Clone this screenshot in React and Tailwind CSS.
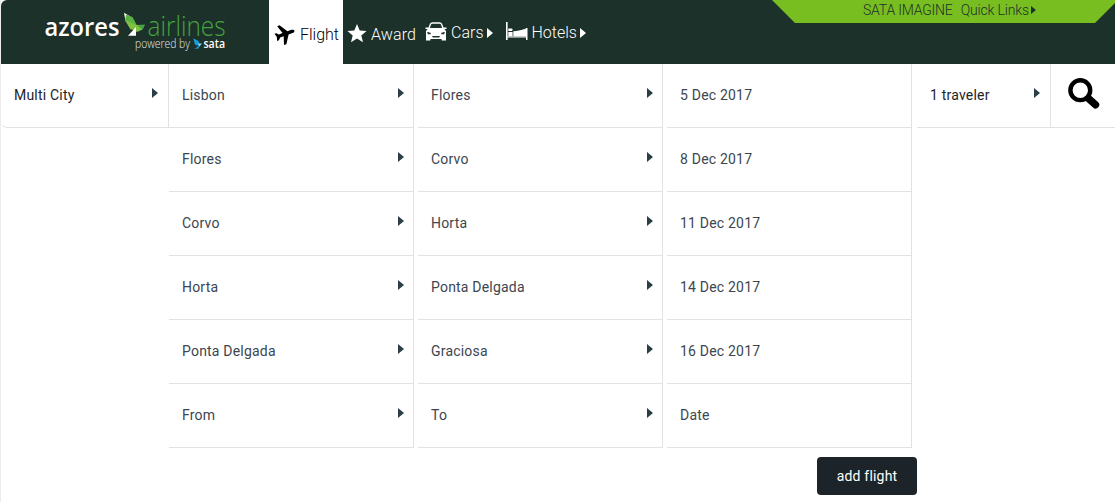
const legs = [
  { from: "Lisbon", to: "Flores", date: "5 Dec 2017" },
  { from: "Flores", to: "Corvo", date: "8 Dec 2017" },
  { from: "Corvo", to: "Horta", date: "11 Dec 2017" },
  { from: "Horta", to: "Ponta Delgada", date: "14 Dec 2017" },
  { from: "Ponta Delgada", to: "Graciosa", date: "16 Dec 2017" },
  { from: "From", to: "To", date: "Date" },
];

const Caret = ({ className = "" }) => (
  <svg className={`shrink-0 ${className}`} width="6" height="10" viewBox="0 0 6 10">
    <path d="M0 0L6 5L0 10Z" fill="currentColor" />
  </svg>
);

const Logo = () => (
  <svg className="ml-[43px] mt-2 shrink-0 overflow-visible" width="184" height="46" viewBox="44 8 184 46">
    <g fontFamily="'Open Sans', sans-serif">
      <text x="44.5" y="36" fontSize="25.5" fontWeight="600" fill="#fff" textLength="75" lengthAdjust="spacingAndGlyphs">azores</text>
      <text x="147.5" y="36" fontSize="27.5" fontWeight="300" fill="#46a33f" textLength="78" lengthAdjust="spacingAndGlyphs">airlines</text>
      <text x="135" y="48.3" fontSize="12" fontWeight="300" fill="#e6ece9" textLength="55" lengthAdjust="spacingAndGlyphs">powered by</text>
      <text x="203.5" y="48.3" fontSize="12" fontWeight="600" fill="#fff" textLength="21.5" lengthAdjust="spacingAndGlyphs">sata</text>
    </g>
    <path d="M124 12.7L129.5 16L125.5 21Z" fill="#fff" />
    <path d="M126 14.5L132.5 17L137.5 26.5L125 21Z" fill="#5cb043" />
    <path d="M124.8 20L137.5 25.5L136 29.5L130.5 29.5Z" fill="#7fc241" />
    <path d="M134.5 25L144.8 24.8L142.5 29.5L137 32L132 29.3Z" fill="#7fc241" />
    <path d="M137 25.5L144.8 24.8L142.5 29.5Z" fill="#43a047" />
    <path d="M128 35.8L136 27V35.8Z" fill="#fff" />
    <path d="M193.2 38.2L198.5 41L200 46L195 44.8Z" fill="#159bd7" />
    <path d="M198 43.5L202 43.5L199.3 46.8Z" fill="#8fd3f3" />
    <path d="M194.5 49L199.2 45.2L198.6 48.6Z" fill="#159bd7" />
  </svg>
);

const PlaneIcon = () => (
  <svg className="mb-0.5" width="22" height="22" viewBox="0 0 22 22">
    <path
      transform="rotate(-20 11 11)"
      d="M1.2 7.2H3.1L5.2 9.3H9L6.3 1H8.8L14.2 9.3H18.4C20 9.3 21 10.2 21 11S20 12.7 18.4 12.7H14.2L8.8 21H6.3L9 12.7H5.2L3.1 14.8H1.2L2.3 11Z"
    />
  </svg>
);

const StarIcon = () => (
  <svg className="mb-0.5" width="20" height="19" viewBox="0 0 20 19" fill="#fff">
    <path d="M10 0L12.7 6.4L19.6 6.9L14.3 11.4L16 18.2L10 14.5L4 18.2L5.7 11.4L.4 6.9L7.3 6.4Z" />
  </svg>
);

const CarIcon = () => (
  <svg className="mb-0.5" width="22" height="19" viewBox="0 0 22 19">
    <path d="M4 6.5L5.4 2.3Q5.9 1 7.5 1H14.5Q16.1 1 16.6 2.3L18 6.5" fill="none" stroke="#fff" strokeWidth="1.4" />
    <path d="M.5 5.5H4V7H.5ZM18 5.5H21.5V7H18Z" fill="#fff" />
    <path d="M3.5 6H18.5L21 9V18.4H16.6V17H5.4V18.4H1V9Z" fill="#fff" />
    <path d="M2.2 9.7L6 11L5.4 12.2H2.8ZM19.8 9.7L16 11L16.6 12.2H19.2ZM7 14H15L14.2 15.6H7.8Z" fill="#1c312a" />
  </svg>
);

const BedIcon = () => (
  <svg className="mb-0.5" width="22" height="19" viewBox="0 0 22 19" fill="#fff">
    <path d="M0 0H1.6V18H0ZM20 6H21.5V18H20ZM1.6 14.4H20V15.5H1.6Z" />
    <path d="M7.3 9.2C11 9.2 14.5 8.4 20 6.5V14.4H7.3ZM2.3 10H6.6V14.4H2.3Z" />
    <path d="M2.3 6.5H5.5Q6.6 6.5 6.6 7.8Q6.6 9 5.5 9H2.3Z" />
  </svg>
);

const SearchIcon = () => (
  <svg width="32" height="32" viewBox="0 0 32 32">
    <circle cx="12.3" cy="12.2" r="9.9" fill="none" stroke="#000" strokeWidth="4.4" />
    <path d="M20.5 20.5L27.5 26.8" stroke="#000" strokeWidth="7.4" strokeLinecap="round" />
  </svg>
);

const Field = ({ label, caret = true }) => (
  <div className="flex h-16 items-center justify-between border-b border-[#e2e2e2] pl-[13px] pr-[9px] pb-px text-[#3c4650]">
    <span>{label}</span>
    {caret && <Caret className="mb-[5px] text-[#2b3e46]" />}
  </div>
);

const Column = ({ items, caret, className = "" }) => (
  <div className={`h-96 w-[245px] shrink-0 border-r border-[#e2e2e2] ${className}`}>
    {items.map((item) => (
      <Field key={item} label={item} caret={caret} />
    ))}
  </div>
);

const Header = () => (
  <header className="relative flex h-16 rounded-tl-md bg-[#1c312a] text-white">
    <Logo />
    <nav className="ml-[41px] flex text-base font-light">
      <a className="flex h-16 w-[74px] items-center gap-1 bg-white pl-[5px] pt-[5px] text-black">
        <PlaneIcon />
        <span>Flight</span>
      </a>
      <a className="ml-1 flex items-center gap-1 pt-[5px]">
        <StarIcon />
        <span className="tracking-[0.1px]">Award</span>
      </a>
      <a className="ml-[9px] flex items-center pt-px">
        <CarIcon />
        <span className="ml-1">Cars</span>
        <Caret className="ml-[3px]" />
      </a>
      <a className="ml-[13px] flex items-center pt-px">
        <BedIcon />
        <span className="ml-1">Hotels</span>
        <Caret className="ml-[3px]" />
      </a>
    </nav>
    <div className="absolute left-[771px] top-0 flex h-[23px] w-[343px] bg-[#78be20] pl-[91px] text-sm leading-5 font-light text-[#1c312a] [clip-path:polygon(0_0,100%_0,100%_3px,323px_100%,23px_100%)]">
      <span className="tracking-[-0.2px]">SATA IMAGINE</span>
      <span className="ml-2 tracking-[-0.15px]">Quick Links</span>
      <svg className="ml-[2px] mt-[6px]" width="5" height="8" viewBox="0 0 5 8">
        <path d="M0 0L5 4L0 8Z" fill="currentColor" />
      </svg>
    </div>
  </header>
);

export default function App() {
  return (
    <div className="h-[502px] w-[1115px] overflow-hidden border-l border-[#ececec] bg-white font-['Roboto',sans-serif] text-sm">
      <Header />
      <main className="flex tracking-[0.2px]">
        <div className="flex h-16 w-[168px] shrink-0 items-center justify-between rounded-bl-md border-r border-b border-[#e2e2e2] pl-[13px] pr-[10px] pb-px text-[#1c2429]">
          <span>Multi City</span>
          <Caret className="mb-[5px] text-[#2b3e46]" />
        </div>
        <Column items={legs.map((leg) => leg.from)} />
        <Column items={legs.map((leg) => leg.to)} className="ml-1" />
        <Column items={legs.map((leg) => leg.date)} caret={false} className="ml-1" />
        <div className="ml-[5px] flex h-16 w-[134px] shrink-0 items-center justify-between border-r border-b border-[#e2e2e2] pl-[13px] pr-[10px] pb-px text-[#1c2429]">
          <span>1 traveler</span>
          <Caret className="mb-[5px] text-[#2b3e46]" />
        </div>
        <div className="flex h-16 w-16 shrink-0 items-center justify-center border-b border-[#e2e2e2] pb-1 pl-0.5">
          <SearchIcon />
        </div>
      </main>
      <button className="ml-[816px] mt-[9px] block h-[38px] w-[100px] rounded bg-[#1c2429] tracking-[0.2px] text-white">
        add flight
      </button>
    </div>
  );
}
